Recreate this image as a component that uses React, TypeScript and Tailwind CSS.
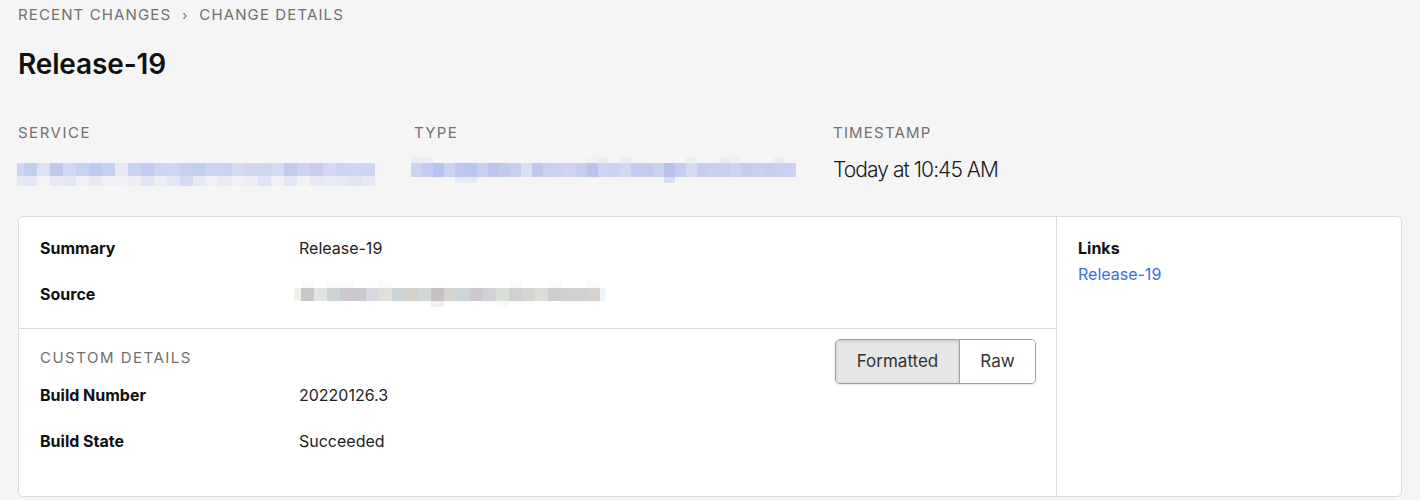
import React from "react";

type Mosaic = { x: number; w: number; rows: { y: number; h: number; colors: string[] }[]; width: number; height: number };

function MosaicSvg({ m }: { m: Mosaic }) {
  return (
    <svg width={m.width} height={m.height} shapeRendering="crispEdges" className="block">
      {m.rows.map((r, ri) =>
        r.colors.map((c, ci) => {
          const x0 = m.x + (ci - 1) * m.w;
          const x = Math.max(0, x0);
          const w = Math.min(m.width, x0 + m.w) - x;
          if (w <= 0 || c === "") return null;
          return <rect key={ri + "-" + ci} x={x} y={r.y} width={w} height={r.h} fill={c} />;
        })
      )}
    </svg>
  );
}

const serviceMosaic: Mosaic = {
  width: 358,
  height: 24,
  x: 7,
  w: 13,
  rows: [
    {
      y: 0,
      h: 13,
      colors: ["#d0d5f0", "#c3cdf0", "#dde1f3", "#c0c8ee", "#d3d8f2", "#c5d2f0", "#c0caf0", "#c6d0f0", "#e6e8f5", "#c8d2f2", "#c3cbf0", "#cdd5f2", "#d0d5f0", "#c8cff0", "#bfcff0", "#cdd4f2", "#cbd3f2", "#d5d9f2", "#d0d5f0", "#d0d5f0", "#d5d9f2", "#c3caf0", "#cdd3f2", "#cbcbf0", "#d5d8f2", "#cdd5f2", "#d0d5f0", "#cdd5f2"],
    },
    {
      y: 13,
      h: 10,
      colors: ["#e5e8f5", "#e3e6f6", "#f3f3f5", "#e6e8f6", "#e3e6f5", "#eef0f6", "#e6e8f6", "#eff0f5", "#f1f1f5", "#eeeff5", "#e1e4f5", "#eceef6", "#e3e6f5", "#d3daf3", "#e6e8f6", "#eff0f5", "#e8eaf5", "#eef0f6", "#eceef5", "#dfe3f5", "#eef0f6", "#e3e6f5", "#f1f2f5", "#e6e8f5", "#e8eaf5", "#e6e8f6", "#e1e4f5", "#e6e9f5"],
    },
  ],
};

const typeMosaic: Mosaic = {
  width: 385,
  height: 27,
  x: 0,
  w: 11,
  rows: [
    {
      y: 0,
      h: 6,
      colors: ["", "#eceef5", "#eceef5", "", "", "", "", "", "", "", "", "", "", "", "", "", "", "#f0f1f5", "#eceef5", "", "#eceef5", "", "", "", "", "", "#eceef5", "", "", "#eceef5", "#eef0f5", "", "", "", "#eceef5", "", "", "", "", "", "", "", "", "#f1f1f5", ""],
    },
    {
      y: 6,
      h: 14,
      colors: ["", "#ccd3f0", "#c3cbf0", "#b7c2ee", "#ccd3f2", "#bec8ee", "#bbc6ee", "#c8cff0", "#bdc5ee", "#c1cbf0", "#c8cef0", "#dde0f3", "#bfc8ee", "#c9d0f2", "#ccd2f0", "#d0d4f2", "#c5cdf0", "#b8c3ee", "#cdd4f2", "#ccd2f0", "#d3d7f2", "#c3cbf0", "#c3cbf0", "#cbd1f0", "#b7c1ee", "#c6cef0", "#d6daf2", "#c5cdf0", "#c8cff0", "#c8cff0", "#cdd3f0", "#c3cbf0", "#c8cff0", "#c6cdf0", "#c8cff0", "#cbd1f2", ""],
    },
    {
      y: 20,
      h: 6,
      colors: ["", "", "", "", "", "#e6e8f5", "#e6e8f5", "", "", "", "", "", "", "", "", "", "", "", "", "", "", "", "", "", "#dadef3", "", "", "", "", "", "", "", "", "", "", "", ""],
    },
  ],
};

const sourceMosaic: Mosaic = {
  width: 311,
  height: 26,
  x: 7,
  w: 13,
  rows: [
    {
      y: 0,
      h: 7,
      colors: ["", "#fafafa", "", "#fafafa", "#fafafa", "", "", "#fafafa", "", "", "", "", "", "", "", "", "", "#fafafa", "", "", "#fafafa", "", "", "#fafafa", "", ""],
    },
    {
      y: 7,
      h: 13,
      colors: ["#f3efeb", "#c9c6ca", "#e3e3e2", "#cdd3d2", "#cdc8cf", "#cbc9cb", "#d9d9e0", "#e0e0da", "#ccd4d3", "#d6cfcb", "#d1d6d6", "#c5c1c3", "#d4d5d0", "#ccd5d5", "#ccc8cc", "#d0d3d6", "#dbdfd9", "#d2cfcf", "#d5d4d4", "#dadcd5", "#cdcdcd", "#d0d0d0", "#d0d0d2", "#d6d1d1", "#eef3fa"],
    },
    {
      y: 20,
      h: 6,
      colors: ["", "", "", "", "", "", "", "", "", "", "", "#f0f0f0", "", "", "", "", "#fafafa", "", "", "", "", "", "", "", ""],
    },
  ],
};

function Row({ label, value }: { label: string; value: React.ReactNode }) {
  return (
    <div className="flex h-[46px] items-center">
      <div className="w-[259px] shrink-0 text-[16px] font-bold text-[#111]">{label}</div>
      <div className="text-[16px] font-normal text-[#222]">{value}</div>
    </div>
  );
}

export default function App() {
  return (
    <div
      className="min-h-[500px] bg-[#f5f5f5] px-[18px] pt-[5px] text-[#222]"
      style={{ fontFamily: "Inter, 'Noto Sans', sans-serif" }}
    >
      <div className="flex items-center text-[15px] leading-5 tracking-[0.075em] text-[#707070] uppercase">
        <span>Recent Changes</span>
        <span className="mx-[11px] text-[13px]">›</span>
        <span>Change Details</span>
      </div>
      <h1 className="mt-[23px] text-[28px] leading-8 font-semibold text-[#111] tracking-[-0.005em]">Release-19</h1>

      <div className="mt-[43px] flex">
        <div className="w-[397px] shrink-0">
          <div className="text-[15px] leading-5 tracking-[0.1em] text-[#707070] uppercase">Service</div>
          <div className="mt-[20px] -ml-[1px]">
            <MosaicSvg m={serviceMosaic} />
          </div>
        </div>
        <div className="w-[419px] shrink-0">
          <div className="-ml-[1px] text-[15px] leading-5 tracking-[0.09em] text-[#707070] uppercase">Type</div>
          <div className="mt-[14px] -ml-[4px]">
            <MosaicSvg m={typeMosaic} />
          </div>
        </div>
        <div className="-ml-[1px]">
          <div className="text-[15px] leading-5 tracking-[0.08em] text-[#707070] uppercase">Timestamp</div>
          <div className="mt-[13px] text-[21px] leading-7 font-light tracking-[-0.045em] text-[#1a1a1a]">Today at 10:45 AM</div>
        </div>
      </div>

      <div className="mt-[29px] flex h-[281px] rounded-[5px] border border-[#dcdcdc] bg-white">
        <div className="w-[1038px] shrink-0 border-r border-[#dcdcdc]">
          <div className="border-b border-[#dcdcdc] px-[21px] pt-[8px] pb-[11px]">
            <Row label="Summary" value="Release-19" />
            <Row label="Source" value={<div className="-ml-[5px]"><MosaicSvg m={sourceMosaic} /></div>} />
          </div>
          <div className="pl-[21px] pr-[20px] pt-[10px]">
            <div className="flex items-start justify-between">
              <div className="pt-[9px] text-[15px] leading-5 tracking-[0.1em] text-[#707070] uppercase">Custom Details</div>
              <div className="flex h-[45px] overflow-hidden rounded-[5px] border border-[#a0a0a0] text-[17px] shadow-[0_1px_2px_rgba(0,0,0,0.12)]">
                <button className="w-[124px] border-r border-[#a0a0a0] bg-[#e6e6e6] text-[#333] shadow-[inset_0_1px_3px_rgba(0,0,0,0.15)]">Formatted</button>
                <button className="w-[75px] bg-white text-[#333]">Raw</button>
              </div>
            </div>
            <div className="-mt-[12px]">
              <Row label="Build Number" value="20220126.3" />
              <Row label="Build State" value="Succeeded" />
            </div>
          </div>
        </div>
        <div className="flex-1 px-[21px] pt-[19px]">
          <div className="text-[16px] leading-6 font-bold text-[#111]">Links</div>
          <a className="mt-[2px] block text-[16px] leading-6 text-[#3b6fe0]" href="#">Release-19</a>
        </div>
      </div>
    </div>
  );
}
